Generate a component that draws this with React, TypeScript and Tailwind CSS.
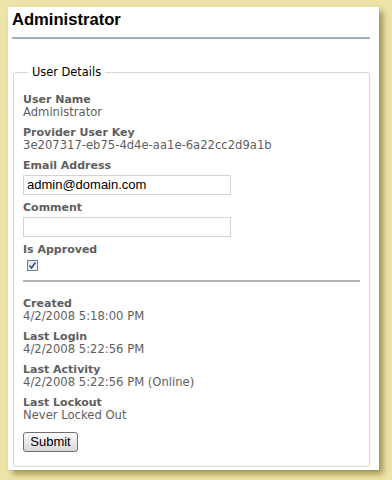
export default function App() {
  const verdana = { fontFamily: '"DejaVu Sans", Verdana, sans-serif' };
  const arial = { fontFamily: '"Liberation Sans", Arial, sans-serif' };

  const Field = ({ label, value }: { label: string; value?: string }) => (
    <div className="mb-[7px]">
      <div className="text-[11px] font-bold leading-[13px] text-[#5e5e5e]">{label}</div>
      {value && <div className="text-[11.6px] leading-[13px] text-[#5e5e5e]">{value}</div>}
    </div>
  );

  return (
    <div className="h-[480px] w-[392px] bg-[#efe4a8] pl-[8px] pt-[7px]" style={verdana}>
      <div className="flex h-[463px] w-[371px] flex-col bg-white px-[4px] pt-[3px] shadow-[4px_4px_6px_rgba(90,80,10,0.55)]">
        <h1 className="text-[16.6px] font-bold leading-[20px] text-black" style={arial}>
          Administrator
        </h1>
        <div className="mt-[7px] mr-[5px] h-[2px] bg-[#a4adb6]" />

        <fieldset className="mt-[25px] ml-[1px] mr-[5px] flex-1 rounded-[3px] border border-[#d6d6d6] px-[9px] pb-2">
          <legend className="ml-[5px] px-[4px] text-[11.4px] text-black">User Details</legend>
          <div className="pt-[12px]">
            <Field label="User Name" value="Administrator" />
            <Field label="Provider User Key" value="3e207317-eb75-4d4e-aa1e-6a22cc2d9a1b" />
            <div className="mb-[5px]">
              <div className="text-[11px] font-bold leading-[13px] text-[#5e5e5e]">Email Address</div>
              <input
                readOnly
                value="admin@domain.com"
                className="mt-[1px] h-[20px] w-[208px] border border-[#d3d3d3] px-[3px] text-[13px] text-black outline-none"
                style={arial}
              />
            </div>
            <div className="mb-[5px]">
              <div className="text-[11px] font-bold leading-[13px] text-[#5e5e5e]">Comment</div>
              <input
                readOnly
                value=""
                className="mt-[1px] h-[20px] w-[208px] border border-[#d3d3d3] px-[3px] text-[13px] text-black outline-none"
                style={arial}
              />
            </div>
            <div>
              <div className="text-[11px] font-bold leading-[13px] text-[#5e5e5e]">Is Approved</div>
              <div className="ml-[4px] mt-[4px] flex h-[11px] w-[11px] items-center justify-center border border-[#6a7f98] bg-gradient-to-br from-[#d8dde6] to-white">
                <svg width="9" height="9" viewBox="0 0 9 9">
                  <path d="M1.5 4.5 L3.5 7 L7.5 1.5" fill="none" stroke="#2a4a8a" strokeWidth="1.5" />
                </svg>
              </div>
            </div>
            <div className="mb-[15px] mt-[9px] h-[2px] bg-[#b4b4b4]" />
            <Field label="Created" value="4/2/2008 5:18:00 PM" />
            <Field label="Last Login" value="4/2/2008 5:22:56 PM" />
            <Field label="Last Activity" value="4/2/2008 5:22:56 PM (Online)" />
            <Field label="Last Lockout" value="Never Locked Out" />
            <button
              className="-mt-[1px] h-[20px] w-[55px] rounded-[3px] border border-[#707070] bg-gradient-to-b from-[#fafafa] to-[#d8d8d8] text-[13px] leading-[18px] text-black"
              style={arial}
            >
              Submit
            </button>
          </div>
        </fieldset>
        <div className="h-[3px]" />
      </div>
    </div>
  );
}
